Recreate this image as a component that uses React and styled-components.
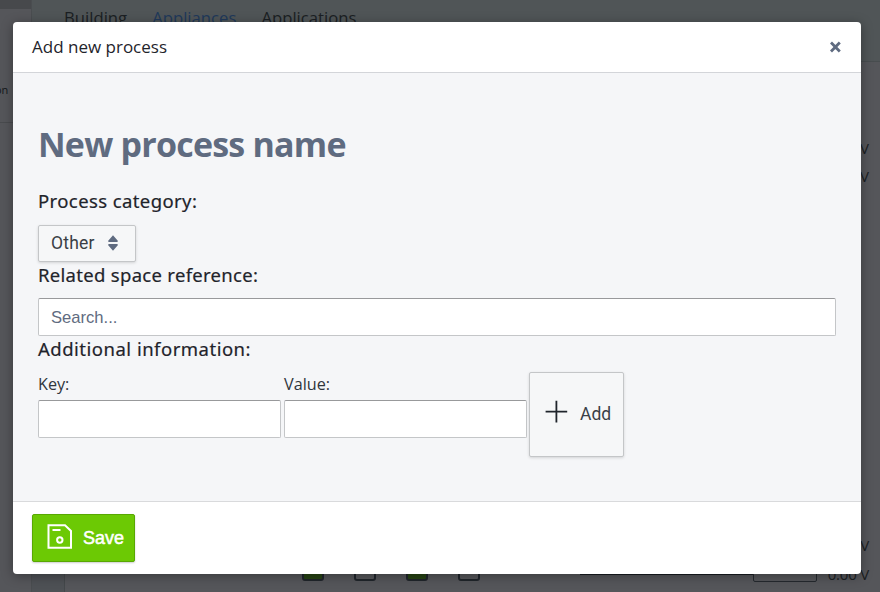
import React from "react";
import styled, { createGlobalStyle } from "styled-components";

const Global = createGlobalStyle`
  * { box-sizing: border-box; }
  body { margin: 0; overflow: hidden; font-family: "Open Sans", "Noto Sans", sans-serif; color: #1f242b; }
  h1, h3, p { margin: 0; }
`;

const Page = styled.div`
  position: relative;
  display: flex;
  height: 592px;
  overflow: hidden;
  background: #55565a;
`;

const Sidebar = styled.aside`
  flex: 0 0 32px;
  height: 592px;
  border-right: 1px solid #4a4d50;
`;

const SidebarTop = styled.div`
  height: 9px;
  background: #47494c;
`;

const SidebarItem = styled.div`
  height: 114px;
  padding-top: 73px;
  border-bottom: 1px solid #494b4e;
  font-size: 11px;
  line-height: 15px;
  color: #14181c;
  text-indent: -5px;
`;

const Main = styled.div`
  flex: 1;
  display: flex;
  flex-direction: column;
`;

const Tabs = styled.nav`
  display: flex;
  gap: 25px;
  height: 62px;
  padding: 6px 0 0 32px;
  background: #505557;
  border-bottom: 1px solid #484d4f;
`;

const Tab = styled.span`
  font-size: 16.7px;
  line-height: 24px;
  font-weight: 400;
  color: ${(p) => (p.$active ? "#20395a" : "#1b1f23")};
`;

const Workspace = styled.div`
  flex: 1;
  display: flex;
`;

const Rail = styled.div`
  flex: 0 0 33px;
  background: #4e5155;
  border-right: 1px solid #44484b;
`;

const Board = styled.div`
  flex: 1;
  display: flex;
  flex-direction: column;
  justify-content: space-between;
`;

const Readings = styled.div`
  display: flex;
  flex-direction: column;
  align-items: flex-end;
  padding: 72px 11px 0 0;
  font-size: 15px;
  line-height: 28px;
  color: #1b1f23;
`;

const BottomRow = styled.div`
  display: flex;
  align-items: flex-start;
  height: 60px;
`;

const Sockets = styled.div`
  display: flex;
  gap: 30px;
  width: 515px;
  padding: 29px 0 0 237px;
`;

const Socket = styled.span`
  width: 22px;
  height: 20px;
  border: 2px solid #20252b;
  border-radius: 3px;
  background: ${(p) => (p.$on ? "#274314" : "transparent")};
`;

const Wire = styled.span`
  width: 173px;
  height: 3px;
  margin-top: 40px;
  background: #191d21;
`;

const Meter = styled.span`
  width: 64px;
  height: 22px;
  margin-top: 28px;
  border: 1.5px solid #24292e;
  border-radius: 2px;
`;

const BottomReadings = styled.div`
  flex: 1;
  margin-top: -1px;
  padding: 0 11px 0 0;
  text-align: right;
  font-size: 15px;
  line-height: 29px;
  letter-spacing: -0.2px;
  color: #1b1f23;
`;

const Dialog = styled.section`
  position: absolute;
  top: 22px;
  left: 13px;
  display: flex;
  flex-direction: column;
  width: 848px;
  height: 552px;
  overflow: hidden;
  border-radius: 4px;
  background: #fff;
  box-shadow: 0 2px 12px rgba(0, 0, 0, 0.35);
`;

const DialogHeader = styled.header`
  display: flex;
  align-items: center;
  justify-content: space-between;
  height: 51px;
  padding: 0 19px 1px 19px;
  border-bottom: 1px solid #d3d5d9;
`;

const DialogTitle = styled.span`
  font-size: 17px;
  line-height: 24px;
`;

const CloseButton = styled.button`
  display: flex;
  padding: 1px 0 0;
  border: 0;
  background: none;
`;

const DialogBody = styled.div`
  display: flex;
  flex-direction: column;
  align-items: flex-start;
  height: 428px;
  padding: 47px 25px 0;
  background: #f5f6f8;
`;

const ProcessName = styled.h1`
  height: 67px;
  font-size: 34px;
  line-height: 48px;
  font-weight: 700;
  letter-spacing: -0.78px;
  color: #5f6b80;
`;

const FieldTitle = styled.h3`
  height: ${(p) => p.$height}px;
  font-family: "Noto Sans", "Open Sans", sans-serif;
  font-size: 18.5px;
  line-height: ${(p) => p.$line || 26}px;
  font-weight: 400;
  letter-spacing: ${(p) => p.$track || 0}px;
  -webkit-text-stroke: 0.2px #1f242b;
`;

const SelectButton = styled.button`
  display: flex;
  align-items: center;
  gap: 12px;
  width: 98px;
  height: 37px;
  padding: 0 12px 2px;
  border: 1px solid #c4c6c8;
  border-radius: 2px;
  background: #f6f7f8;
  box-shadow: 0 1px 3px rgba(0, 0, 0, 0.14);
  font: 400 17.5px Roboto, sans-serif;
  letter-spacing: 0.2px;
  color: #3a3f46;
`;

const Input = styled.input`
  width: ${(p) => p.$width};
  height: 38px;
  padding: 2px 12px 0;
  border: 1px solid #c4c6c8;
  border-top-color: #98999b;
  border-radius: 2px;
  background: #fff;
  outline: 0;
  font: 400 16.6px "Liberation Sans", sans-serif;
  color: #1f242b;
  &::placeholder { color: #5f6b80; opacity: 1; }
`;

const PairRow = styled.div`
  display: flex;
`;

const Field = styled.label`
  display: flex;
  flex-direction: column;
  margin-right: ${(p) => p.$gap}px;
`;

const FieldLabel = styled.span`
  height: 28px;
  font-size: 16.2px;
  line-height: 24px;
  font-weight: 400;
  color: #30353c;
`;

const AddButton = styled.button`
  display: flex;
  align-items: center;
  gap: 12px;
  width: 95px;
  height: 85px;
  padding: 0 0 3px 14px;
  border: 1px solid #c4c6c8;
  border-radius: 2px;
  background: #f6f7f8;
  box-shadow: 0 1px 3px rgba(0, 0, 0, 0.14);
  font: 400 17.5px Roboto, sans-serif;
  color: #3a3f46;
  svg { margin-top: -2px; }
  span { margin-top: 2px; }
`;

const DialogFooter = styled.footer`
  flex: 1;
  padding: 12px 19px;
  border-top: 1px solid #d9dadc;
`;

const SaveButton = styled.button`
  display: flex;
  align-items: center;
  gap: 11px;
  width: 103px;
  height: 48px;
  padding: 0 0 1px 14px;
  border: 1px solid #58a802;
  border-radius: 2px;
  background: #6cc904;
  box-shadow: 0 1px 2px rgba(0, 0, 0, 0.2);
  font: 400 18px "Liberation Sans", sans-serif;
  -webkit-text-stroke: 0.5px #fff;
  color: #fff;
  svg { margin-top: -2px; }
  span { margin-top: 1px; }
`;

export default function App() {
  return (
    <>
      <Global />
      <Page>
        <Sidebar>
          <SidebarTop />
          <SidebarItem>on</SidebarItem>
        </Sidebar>
        <Main>
          <Tabs>
            <Tab>Building</Tab>
            <Tab $active>Appliances</Tab>
            <Tab>Applications</Tab>
          </Tabs>
          <Workspace>
            <Rail />
            <Board>
              <Readings>
                <span>0.00 V</span>
                <span>0.00 V</span>
              </Readings>
              <BottomRow>
                <Sockets>
                  <Socket $on />
                  <Socket />
                  <Socket $on />
                  <Socket />
                </Sockets>
                <Wire />
                <Meter />
                <BottomReadings>
                  <div>0.00 V</div>
                  <div>0.00 V</div>
                </BottomReadings>
              </BottomRow>
            </Board>
          </Workspace>
        </Main>
        <Dialog role="dialog" aria-label="Add new process">
          <DialogHeader>
            <DialogTitle>Add new process</DialogTitle>
            <CloseButton aria-label="Close">
              <svg width="13" height="12" viewBox="0 0 13 12" stroke="#5f6b80" strokeWidth="2.8" strokeLinecap="butt">
                <path d="M2 1.6 10.8 10.4M10.8 1.6 2 10.4" />
              </svg>
            </CloseButton>
          </DialogHeader>
          <DialogBody>
            <ProcessName>New process name</ProcessName>
            <FieldTitle $height={38} $line={28} $track={0.4}>Process category:</FieldTitle>
            <SelectButton>
              Other
              <svg width="12" height="16" viewBox="0 0 12 16" fill="#5f6b80">
                <path d="M6 .3 10.8 5.8Q11 7 10 7H2Q1 7 1.2 5.8ZM6 15.7 10.8 10.2Q11 9 10 9H2Q1 9 1.2 10.2Z" />
              </svg>
            </SelectButton>
            <FieldTitle $height={36} $track={0.3}>Related space reference:</FieldTitle>
            <Input $width="798px" placeholder="Search..." />
            <FieldTitle $height={36} $track={0.5}>Additional information:</FieldTitle>
            <PairRow>
              <Field $gap={3}><FieldLabel>Key:</FieldLabel><Input $width="243px" /></Field>
              <Field $gap={2}><FieldLabel>Value:</FieldLabel><Input $width="243px" /></Field>
              <AddButton>
                <svg width="24" height="24" viewBox="0 0 24 24" stroke="#1f242b" strokeWidth="1.8">
                  <path d="M12.4 .8V22.4M1.6 11.6H23.2" />
                </svg>
                <span>Add</span>
              </AddButton>
            </PairRow>
          </DialogBody>
          <DialogFooter>
            <SaveButton>
              <svg width="25" height="25" viewBox="0 0 25 25" fill="none" stroke="#fff" strokeWidth="2">
                <path d="M1.5 1.2H18L24 7V23.8H1.5ZM5.5 6H13.5" />
                <circle cx="12.8" cy="16" r="2.7" />
              </svg>
              <span>Save</span>
            </SaveButton>
          </DialogFooter>
        </Dialog>
      </Page>
    </>
  );
}
